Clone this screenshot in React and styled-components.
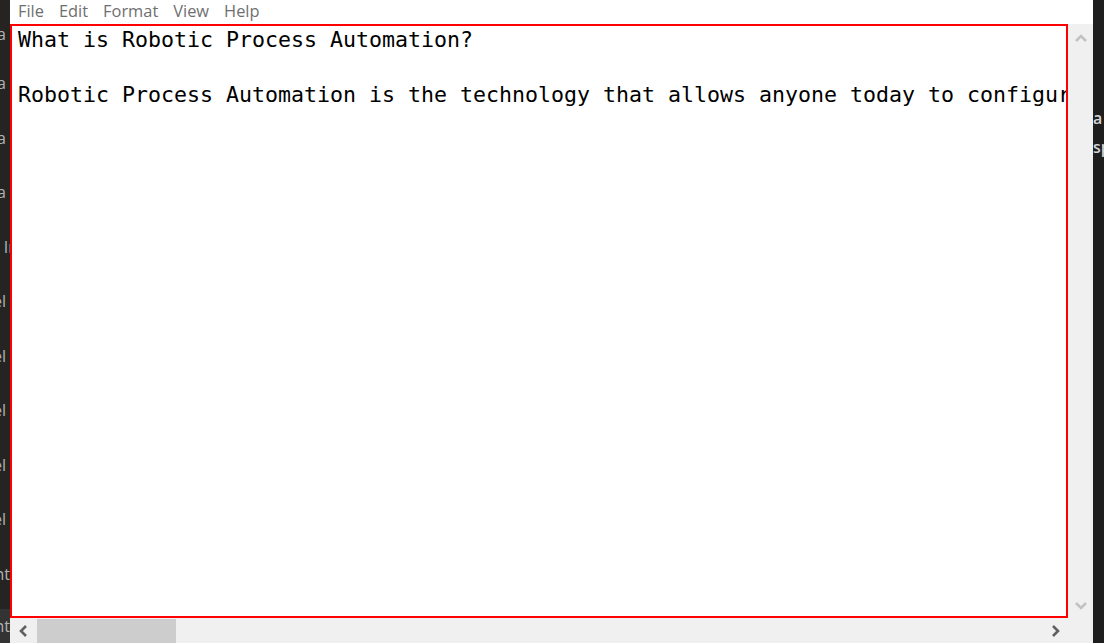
import styled, { createGlobalStyle } from "styled-components";

const GlobalStyle = createGlobalStyle`
  html, body {
    margin: 0;
    padding: 0;
    height: 100%;
    overflow: hidden;
  }
  #root {
    height: 100%;
  }
`;

const Window = styled.div`
  display: flex;
  height: 100vh;
  width: 100%;
  font-family: "Open Sans", "Noto Sans", sans-serif;
`;

const BackStrip = styled.div`
  width: 10px;
  flex-shrink: 0;
  background: #252423;
  overflow: hidden;
  display: flex;
  flex-direction: column;
  font-size: 16px;
  color: #b3b3b3;
`;

const BackLine = styled.div`
  height: 54.5px;
  display: flex;
  align-items: center;
  justify-content: flex-end;
  white-space: nowrap;
  flex-shrink: 0;
  &:first-child {
    height: 44px;
    margin-top: 12px;
  }
  span {
    margin-right: ${(p) => p.$shift}px;
  }
`;

const BackFooter = styled.div`
  flex: 1;
  background: #333333;
  display: flex;
  align-items: center;
  justify-content: flex-end;
  white-space: nowrap;
  margin-top: 8px;
`;

const RightStrip = styled.div`
  width: 11px;
  flex-shrink: 0;
  background: #1e1e1e;
  overflow: hidden;
  color: #d4d4d4;
  font-size: 16px;
  font-weight: 600;
  padding-top: 104px;
  line-height: 29px;
  white-space: nowrap;
`;

const Notepad = styled.div`
  flex: 1;
  display: flex;
  flex-direction: column;
  min-width: 0;
  background: #ffffff;
`;

const MenuBar = styled.div`
  height: 24px;
  display: flex;
  align-items: flex-start;
  padding-left: 0;
  background: #ffffff;
  flex-shrink: 0;
`;

const MenuItem = styled.span`
  font-size: 16.4px;
  color: #6f6f6f;
  padding: 0 7px 0 8px;
  line-height: 21px;
`;

const Body = styled.div`
  flex: 1;
  display: flex;
  min-height: 0;
`;

const Editor = styled.div`
  flex: 1;
  border: 2px solid #ff0000;
  overflow: hidden;
  padding: 0 0 0 6px;
  font-family: "DejaVu Sans Mono", "Liberation Mono", monospace;
  font-size: 21.6px;
  line-height: 27.5px;
  color: #000000;
  white-space: pre;
`;

const VScroll = styled.div`
  width: 25px;
  flex-shrink: 0;
  background: #f0f0f0;
  display: flex;
  flex-direction: column;
  justify-content: space-between;
  align-items: center;
  padding: 10px 0 8px;
`;

const HScroll = styled.div`
  height: 25px;
  flex-shrink: 0;
  display: flex;
  align-items: stretch;
  background: #f0f0f0;
`;

const ArrowButton = styled.div`
  width: ${(p) => p.$w}px;
  display: flex;
  align-items: center;
  justify-content: center;
  flex-shrink: 0;
`;

const Track = styled.div`
  flex: 1;
  display: flex;
  padding-top: 1px;
`;

const Thumb = styled.div`
  width: 139px;
  background: #cdcdcd;
`;

const Chevron = ({ dir, color }) => {
  const pts = {
    up: "1,7 6,2 11,7",
    down: "1,2 6,7 11,2",
    left: "7,1 2,6 7,11",
    right: "2,1 7,6 2,11",
  }[dir];
  const vertical = dir === "up" || dir === "down";
  return (
    <svg
      width={vertical ? 12 : 9}
      height={vertical ? 9 : 12}
      viewBox={vertical ? "0 0 12 9" : "0 0 9 12"}
    >
      <polyline points={pts} fill="none" stroke={color} strokeWidth="2.6" />
    </svg>
  );
};

const backLines = [
  { text: "Data\u00a0", shift: 0 },
  { text: "Data\u00a0", shift: 0 },
  { text: "Data\u00a0", shift: 0 },
  { text: "Data\u00a0", shift: 0 },
  { text: "In", shift: -8 },
  { text: "Label", shift: 4 },
  { text: "Label", shift: 4 },
  { text: "Label", shift: 4 },
  { text: "Label", shift: 4 },
  { text: "Label", shift: 4 },
  { text: "Content", shift: 0 },
];

const text = `What is Robotic Process Automation?

Robotic Process Automation is the technology that allows anyone today to configure computer software, or a "robot" to emulate and integrate the actions of a human interacting within digital systems to execute a business process.`;

export default function App() {
  return (
    <>
      <GlobalStyle />
      <Window>
        <BackStrip>
          {backLines.map((l, i) => (
            <BackLine key={i} $shift={l.shift}>
              <span>{l.text}</span>
            </BackLine>
          ))}
          <BackFooter>Content</BackFooter>
        </BackStrip>
        <Notepad>
          <MenuBar>
            <MenuItem>File</MenuItem>
            <MenuItem>Edit</MenuItem>
            <MenuItem>Format</MenuItem>
            <MenuItem>View</MenuItem>
            <MenuItem>Help</MenuItem>
          </MenuBar>
          <Body>
            <Editor>{text}</Editor>
            <VScroll>
              <Chevron dir="up" color="#c2c2c2" />
              <Chevron dir="down" color="#c2c2c2" />
            </VScroll>
          </Body>
          <HScroll>
            <ArrowButton $w={27}>
              <Chevron dir="left" color="#606060" />
            </ArrowButton>
            <Track>
              <Thumb />
            </Track>
            <ArrowButton $w={25}>
              <Chevron dir="right" color="#606060" />
            </ArrowButton>
            <ArrowButton $w={25} />
          </HScroll>
        </Notepad>
        <RightStrip>
          <div>a</div>
          <div>sp</div>
        </RightStrip>
      </Window>
    </>
  );
}
